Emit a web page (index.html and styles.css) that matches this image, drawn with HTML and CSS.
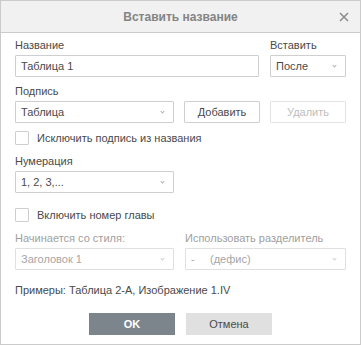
FILE: index.html
```html
<!DOCTYPE html>
<html>
<head>
	<meta charset="utf-8">
	<title>Вставить название</title>
	<link rel="stylesheet" href="styles.css">
</head>
<body>
	<div class="dialog">
		<div class="header">
			<span class="title">Вставить название</span>
			<span class="close">
				<svg width="10" height="10" viewBox="0 0 10 10"><path d="M1 1L9 9M9 1L1 9" stroke="#8a8a8a" stroke-width="1.5" fill="none"/></svg>
			</span>
		</div>
		<div class="body">
			<!-- название + вставить -->
			<div class="row">
				<div class="field grow">
					<label class="label">Название</label>
					<div class="input">Таблица 1</div>
				</div>
				<div class="field w76">
					<label class="label">Вставить</label>
					<div class="select">После<i class="arrow"></i></div>
				</div>
			</div>
			<div class="field">
				<label class="label">Подпись</label>
				<div class="row tight">
					<div class="select w159">Таблица<i class="arrow"></i></div>
					<div class="btn w76">Добавить</div>
					<div class="btn w76 disabled">Удалить</div>
				</div>
			</div>
			<div class="check">
				<span class="box"></span>Исключить подпись из названия
			</div>
			<div class="field">
				<label class="label">Нумерация</label>
				<div class="select w159">1, 2, 3,...<i class="arrow"></i></div>
			</div>
			<div class="check second">
				<span class="box"></span>Включить номер главы
			</div>
			<div class="row two">
				<div class="field w159">
					<label class="label muted">Начинается со стиля:</label>
					<div class="select disabled">Заголовок 1<i class="arrow"></i></div>
				</div>
				<div class="field grow">
					<label class="label muted">Использовать разделитель</label>
					<div class="select disabled"><span class="dash">-</span>(дефис)<i class="arrow"></i></div>
				</div>
			</div>
			<div class="example">Примеры: Таблица 2-А, Изображение 1.IV</div>
		</div>
		<div class="footer">
			<div class="fbtn primary">OK</div>
			<div class="fbtn">Отмена</div>
		</div>
	</div>
</body>
</html>
```

FILE: styles.css
```css
* {
	padding: 0;
	margin: 0;
	box-sizing: border-box;
}
body {
	background: #fff;
	font-family: Arial, "Liberation Sans", sans-serif;
	font-size: 11px;
	color: #4a4a4a;
}
.dialog {
	width: 361px;
	height: 345px;
	border: 1px solid #cbcbcb;
	display: flex;
	flex-direction: column;
}
.header {
	height: 32px;
	background: #f1f1f1;
	border-bottom: 1px solid #cbcbcb;
	display: flex;
	align-items: center;
	justify-content: center;
	position: relative;
}
.title {
	font-size: 12px;
	font-weight: bold;
	color: #848484;
}
.close {
	position: absolute;
	right: 11px;
	top: 11px;
	line-height: 0;
}
.body {
	padding: 6px 14px 0 14px;
	display: flex;
	flex-direction: column;
}
.row {
	display: flex;
	gap: 11px;
}
.row.tight {
	gap: 10px;
}
.field {
	display: flex;
	flex-direction: column;
	margin-bottom: 8px;
}
.grow {
	flex: 1;
}
.w76 {
	width: 76px;
}
.w159 {
	width: 159px;
}
.label {
	height: 16px;
	line-height: 13px;
	color: #4a4a4a;
}
.label.muted {
	color: #a0a0a0;
}
.input, .select, .btn {
	height: 22px;
	border: 1px solid #cfcfcf;
	border-radius: 1px;
	line-height: 20px;
	padding: 0 5px;
	color: #4a4a4a;
	background: #fff;
}
.select {
	position: relative;
}
.arrow {
	position: absolute;
	right: 9px;
	top: 8px;
	width: 3px;
	height: 3px;
	border-right: 1px solid #b0b0b0;
	border-bottom: 1px solid #b0b0b0;
	transform: rotate(45deg);
}
.select.disabled {
	color: #a6a6a6;
	border-color: #e0e0e0;
}
.select.disabled .arrow {
	border-color: #d0d0d0;
}
.dash {
	display: inline-block;
	width: 19px;
}
.btn {
	text-align: center;
	padding: 0;
}
.btn.disabled {
	color: #bdbdbd;
	border-color: #e3e3e3;
}
.check {
	display: flex;
	align-items: center;
	height: 14px;
	margin: 0 0 10px 0;
}
.check.second {
	margin-top: 7px;
}
.box {
	width: 14px;
	height: 14px;
	border: 1px solid #cfcfcf;
	border-radius: 1px;
	margin-right: 8px;
}
.two {
	gap: 11px;
}
.example {
	margin-top: 6px;
}
.footer {
	display: flex;
	justify-content: center;
	gap: 11px;
	margin-top: auto;
	margin-bottom: 9px;
}
.fbtn {
	width: 86px;
	height: 22px;
	line-height: 22px;
	text-align: center;
	background: #e0e0e0;
	color: #4a4a4a;
}
.fbtn.primary {
	background: #7d858c;
	color: #fff;
	font-weight: bold;
}
```
